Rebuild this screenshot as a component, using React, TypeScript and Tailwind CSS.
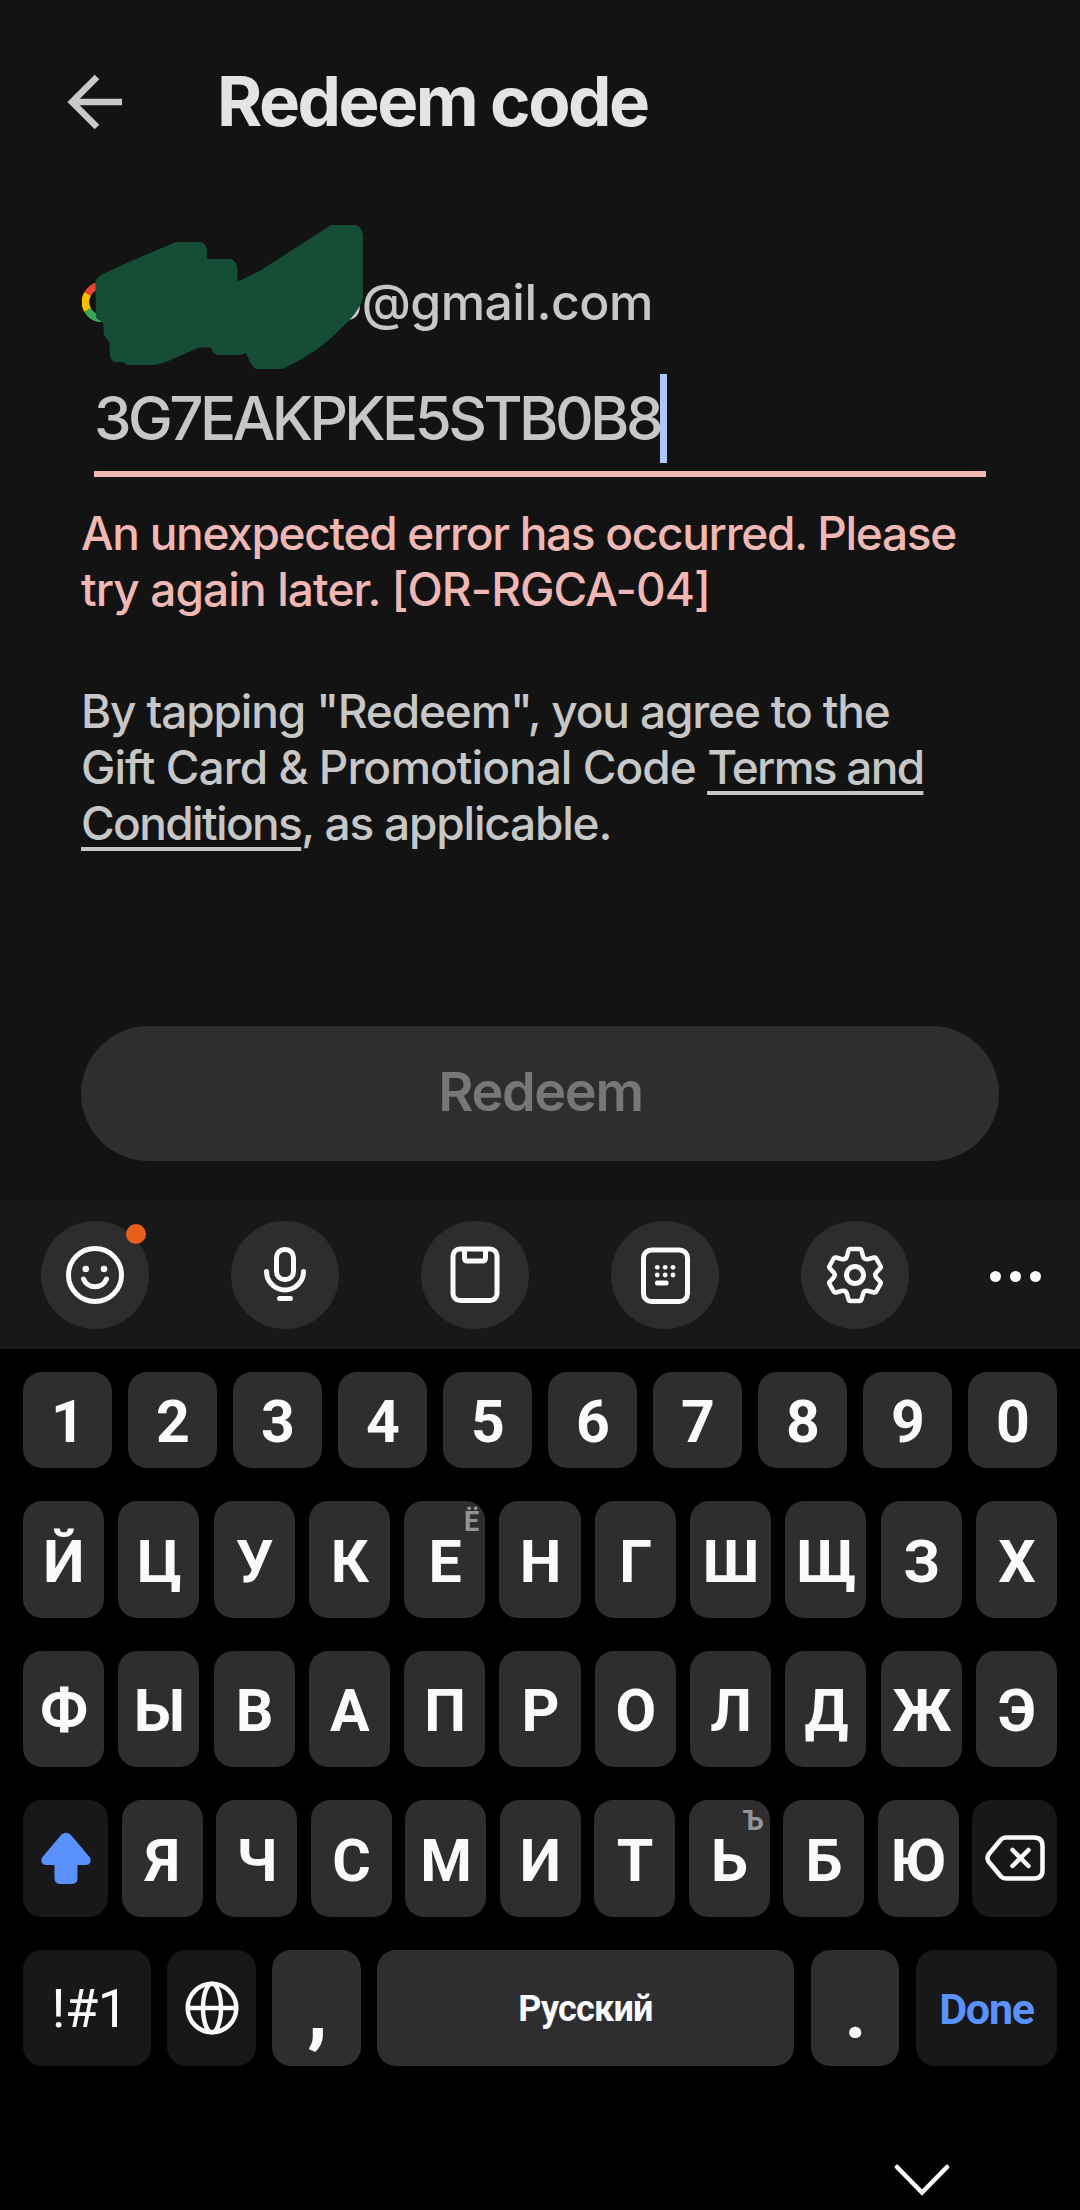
import type { ReactNode } from 'react';
import clsx from 'clsx';

const numberRow = ['1', '2', '3', '4', '5', '6', '7', '8', '9', '0'];
const topRow = ['Й', 'Ц', 'У', 'К', 'Е', 'Н', 'Г', 'Ш', 'Щ', 'З', 'Х'];
const middleRow = ['Ф', 'Ы', 'В', 'А', 'П', 'Р', 'О', 'Л', 'Д', 'Ж', 'Э'];
const bottomRow = ['Я', 'Ч', 'С', 'М', 'И', 'Т', 'Ь', 'Б', 'Ю'];

const hints: Record<string, string> = { Е: 'Ё', Ь: 'Ъ' };

function Key({ children, hint, dark, className }: { children: ReactNode; hint?: string; dark?: boolean; className?: string }) {
  return (
    <button
      className={clsx(
        'relative flex h-full items-center justify-center rounded-[19px]',
        dark ? 'bg-[#18181a]' : 'bg-[#2e2e30]',
        className
      )}
    >
      {children}
      {hint && (
        <span className="absolute right-[6px] top-[8px] text-[27px] leading-[27px] font-bold text-[#949498]">{hint}</span>
      )}
    </button>
  );
}

function LetterKey({ letter, className }: { letter: string; className?: string }) {
  return (
    <Key hint={hints[letter]} className={className}>
      <span className="pt-[3px] pl-px text-[59px] leading-none font-bold">{letter}</span>
    </Key>
  );
}

function Tool({ children, badge }: { children: ReactNode; badge?: boolean }) {
  return (
    <button className="relative flex size-[108px] items-center justify-center rounded-full bg-[#2d2d2f]">
      <svg viewBox="0 0 64 64" className="size-[64px]" fill="none" stroke="#fafafc" strokeWidth="5" strokeLinecap="round" strokeLinejoin="round">
        {children}
      </svg>
      {badge && <span className="absolute right-[3px] top-[3px] size-[20px] rounded-full bg-[#e8601c]" />}
    </button>
  );
}

function Account() {
  return (
    <div className="relative mt-[60px] flex h-[80px] items-center">
      <svg viewBox="0 0 40 40" className="ml-[82px] size-[40px]" fill="none" strokeWidth="7.5">
        <path d="M5.7 11.8A16.5 16.5 0 0 1 31 7.5" stroke="#ea4335" />
        <path d="M5.7 11.8A16.5 16.5 0 0 0 5.7 28.2" stroke="#fbbc04" />
        <path d="M5.7 28.2A16.5 16.5 0 0 0 31 32.5" stroke="#34a853" />
      </svg>
      <span className="ml-[210px] text-[50px] leading-[80px] font-medium tracking-[-0.550px] text-[#c7c7c7]">o@gmail.com</span>
      {/* marker stroke hiding the name */}
      <svg viewBox="90 220 280 154" className="absolute left-[90px] top-[-42px] h-[154px] w-[280px]" fill="#164d36">
        <path d="M95.5 282Q96 277 105 273L127 262.7 176 242H200Q207 243 207 252V259H230Q237 260 237.500 270V281.700L260 270.700 305 241.700 331 225H355Q362 226 363 236V297Q362 306 349 320.700L327 341.700Q305 359 282 369H256Q251 366 246 353 243 355 237.500 355H217Q212 353 211 347.500H199L168 361Q158 365 152 365H127L123 362H115Q110 360 110 354L109 341.700 104 335 103 322.700 96 318Z" />
      </svg>
    </div>
  );
}

export default function App() {
  return (
    <div className="flex h-[2210px] w-[1080px] flex-col overflow-hidden bg-[#131313] font-['Inter',sans-serif]">
      <header className="flex h-[202px] shrink-0 items-center">
        <svg viewBox="0 0 56 56" className="ml-[67px] mt-[2px] size-[56px]" fill="none" stroke="#c9c9c9" strokeWidth="6.500">
          <path d="M55 28H5M30 3 5 28 30 53" />
        </svg>
        <h1 className="ml-[94px] text-[69px] leading-none font-bold tracking-[-2.500px] whitespace-nowrap text-[#e4e4e4]">Redeem code</h1>
      </header>

      <Account />

      <div className="ml-[94px] mt-[32px] flex h-[103px] w-[892px] items-start border-b-[6px] border-[#f0b8b5]">
        <span className="w-[566px] text-[60px] leading-[89px] font-medium tracking-[-3.550px] whitespace-nowrap text-[#c7c7c7]">3G7EAKPKE5STB0B8</span>
        <span className="h-[89px] w-[7px] shrink-0 bg-[#adc8fb]" />
      </div>

      <p className="ml-[81px] mt-[28px] text-[46px] leading-[56px] font-medium whitespace-nowrap text-[#f0b8b5]">
        <span className="block tracking-[-1.300px]">An unexpected error has occurred. Please</span>
        <span className="block tracking-[-0.900px]">try again later. [OR-RGCA-04]</span>
      </p>

      <p className="ml-[81px] mt-[66px] text-[46px] leading-[56px] font-medium whitespace-nowrap text-[#c7c7c7]">
        <span className="block tracking-[-1.150px]">By tapping "Redeem", you agree to the</span>
        <span className="block tracking-[-0.970px]">
          Gift Card &amp; Promotional Code{' '}
          <a className="tracking-[-1.750px] underline decoration-[4px] underline-offset-[7px]">Terms and</a>
        </span>
        <span className="block tracking-[-1.200px]">
          <a className="tracking-[-1.650px] underline decoration-[4px] underline-offset-[7px]">Conditions</a>, as applicable.
        </span>
      </p>

      <button className="ml-[81px] mr-[81px] mt-[175px] h-[135px] shrink-0 rounded-full bg-[#2e2e2e] pb-[4px] pl-px text-[54px] leading-none font-semibold tracking-[-1.400px] text-[#777777]">
        Redeem
      </button>

      <div className="mt-[39px] flex h-[149px] shrink-0 items-center justify-between bg-[#18181a] pl-[41px] pr-[39px]">
        <div className="flex gap-[82px]">
          <Tool badge>
            <circle cx="32" cy="32" r="26.500" />
            <path d="M20.500 36a12.400 12.400 0 0 0 23 0" />
            <g fill="#fafafc" stroke="none">
              <circle cx="22.800" cy="26" r="3.300" />
              <circle cx="41" cy="26" r="3.300" />
            </g>
          </Tool>
          <Tool>
            <rect x="23.500" y="6.500" width="17" height="30" rx="8" />
            <path d="M13.500 28.500a18.500 18.500 0 0 0 37 0M26.500 55.500h11" />
          </Tool>
          <Tool>
            <rect x="10" y="6" width="44" height="51.500" rx="7" />
            <path d="M21.500 7v8q0 3 3 3h15q3 0 3-3V7" />
          </Tool>
          <Tool>
            <rect x="10.500" y="7" width="44" height="51.500" rx="8" />
            <g fill="#fafafc" stroke="none">
              <circle cx="24.300" cy="24.300" r="2.400" />
              <circle cx="32.200" cy="24.300" r="2.400" />
              <circle cx="40" cy="24.300" r="2.400" />
              <circle cx="24.300" cy="32" r="2.400" />
              <circle cx="32.200" cy="32" r="2.400" />
              <circle cx="40" cy="32" r="2.400" />
              <rect x="22" y="37.500" width="13.500" height="5" rx="2" />
            </g>
          </Tool>
          <Tool>
            <circle cx="32" cy="32" r="8.500" />
            <path d="M27.500 6h9q1.500 0 2 1.500l1.500 5.500q1 4 5.500 3l5.500-1.500q1.500-.3 2.300 1l4.200 7.500q.7 1.300-.3 2.300l-3.700 4q-2.500 2.700 0 5.400l3.700 4q1 1 .3 2.300l-4.200 7.500q-.8 1.300-2.300 1l-5.500-1.500q-4.500-1-5.500 3l-1.500 5.500q-.5 1.500-2 1.500h-9q-1.500 0-2-1.500l-1.500-5.500q-1-4-5.500-3l-5.500 1.500q-1.500.3-2.300-1l-4.200-7.500q-.7-1.300.3-2.300l3.700-4q2.500-2.700 0-5.400l-3.700-4q-1-1-.3-2.300l4.200-7.500q.8-1.300 2.300-1l5.500 1.500q4.500 1 5.500-3l1.500-5.500q.5-1.500 2-1.500Z" strokeWidth="4.500" />
          </Tool>
        </div>
        <div className="flex gap-[9px] pt-[3px]">
          <span className="size-[11px] rounded-full bg-[#fafafc]" />
          <span className="size-[11px] rounded-full bg-[#fafafc]" />
          <span className="size-[11px] rounded-full bg-[#fafafc]" />
        </div>
      </div>

      <div className="flex flex-1 flex-col bg-black px-[23px] pt-[23px] font-['Roboto',sans-serif] text-[#fafafc]">
        <div className="grid h-[96px] grid-cols-10 gap-[16px]">
          {numberRow.map((n) => (
            <LetterKey key={n} letter={n} />
          ))}
        </div>
        <div className="mt-[33px] grid h-[117px] grid-cols-11 gap-[14.3px]">
          {topRow.map((l) => (
            <LetterKey key={l} letter={l} />
          ))}
        </div>
        <div className="mt-[33px] grid h-[116px] grid-cols-11 gap-[14.3px]">
          {middleRow.map((l) => (
            <LetterKey key={l} letter={l} />
          ))}
        </div>
        <div className="mt-[33px] flex h-[117px] justify-between">
          <Key dark className="w-[85px]">
            <svg viewBox="0 0 50 52" className="mb-[1px] h-[52px] w-[50px]" fill="#5b91fd">
              <path d="M20.500 2.500Q25 -1 29.500 2.500L48.500 25Q50.500 28 49 31 48 33 45 33H36.500V46Q36.500 52 30 52H20Q13.500 52 13.500 46V33H5Q2 33 1 31 -.5 28 1.500 25Z" />
            </svg>
          </Key>
          {bottomRow.map((l) => (
            <LetterKey key={l} letter={l} className="w-[81px]" />
          ))}
          <Key dark className="w-[85px]">
            <svg viewBox="0 0 60 46" className="mb-[1px] h-[46px] w-[60px]" fill="none" stroke="#fafafc" strokeWidth="4.500" strokeLinecap="round" strokeLinejoin="round">
              <path d="M21 2.500H49Q57.500 2.500 57.500 11V35Q57.500 43.500 49 43.500H21Q18 43.500 16 41.500L3.500 26.500Q1.500 23 3.500 19.500L16 4.500Q18 2.500 21 2.500Z" />
              <path d="m27.500 15 16 16m0-16-16 16" />
            </svg>
          </Key>
        </div>
        <div className="mt-[33px] flex h-[116px] gap-[16px]">
          <Key dark className="w-[128px]">
            <span className="pt-px pl-[5px] text-[54px] leading-none tracking-[-0.500px]">!#1</span>
          </Key>
          <Key dark className="w-[89px]">
            <svg viewBox="0 0 54 54" className="size-[54px]" fill="none" stroke="#fafafc" strokeWidth="4.500">
              <circle cx="27" cy="27" r="24.300" />
              <ellipse cx="27" cy="27" rx="9" ry="24.300" />
              <path d="M3 27h48" />
            </svg>
          </Key>
          <Key className="w-[89px]">
            <span className="pt-[6px] pl-[2px] text-[76px] leading-none font-black">,</span>
          </Key>
          <Key className="w-[417px]">
            <span className="pt-[1px] text-[36px] leading-none font-bold tracking-[-0.8px]">Русский</span>
          </Key>
          <Key className="ml-px w-[88px]">
            <span className="pt-[6px] pl-px text-[76px] leading-none font-bold">.</span>
          </Key>
          <Key dark className="ml-px w-[141px]">
            <span className="pt-[2px] text-[43px] leading-none font-bold tracking-[-1.200px] text-[#5b91fb]">Done</span>
          </Key>
        </div>
        <svg viewBox="0 0 60 34" className="ml-[869px] mt-[98px] h-[34px] w-[60px]" fill="none" stroke="#fafafc" strokeWidth="4.500" strokeLinecap="round">
          <path d="M5 3 30 28.500 55 3" />
        </svg>
      </div>
    </div>
  );
}
